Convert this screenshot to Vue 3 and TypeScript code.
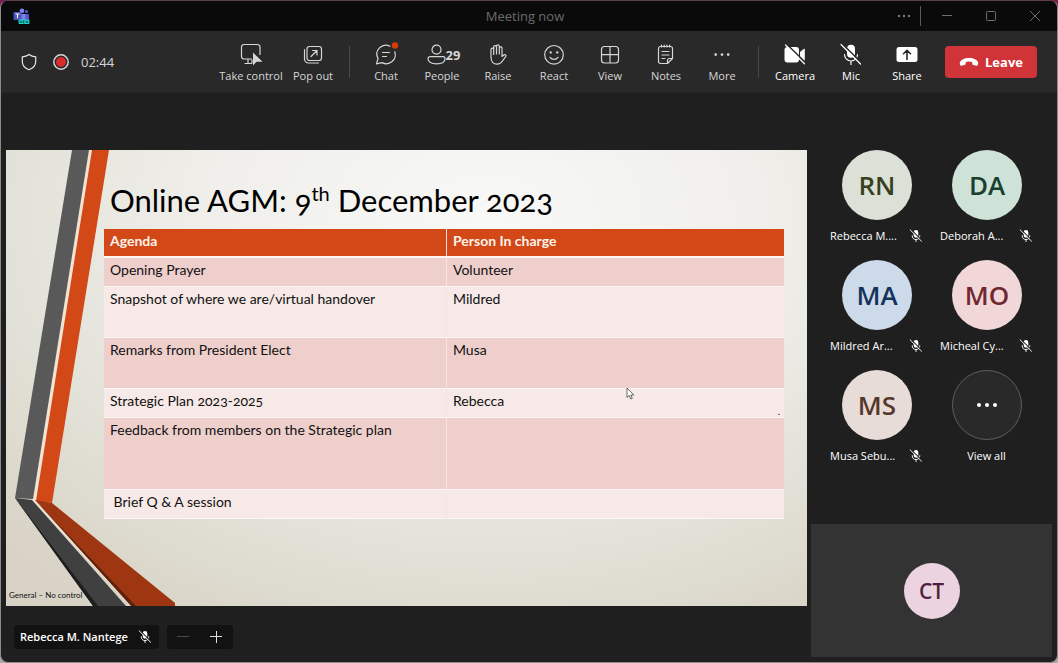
<script setup lang="ts">
interface Shape {
  d: string
  solid?: boolean
  gap?: boolean
}

interface Tool {
  id: string
  label: string
  shapes: Shape[]
  count?: number
  alert?: boolean
  bright?: boolean
  wide?: boolean
}

interface Person {
  initials: string
  name: string
  tone: string
}

const shareTools: Tool[] = [
  {
    id: 'control',
    label: 'Take control',
    wide: true,
    shapes: [
      { d: 'M12.500 16H5A2.500 2.500 0 0 1 2.500 13.500V4A2.500 2.500 0 0 1 5 1.500H18.500A2.500 2.500 0 0 1 21 4V11.500M9 16V20M13 17V20M6 20.500H12.500' },
      { d: 'M14 9.500V22.500L17.500 18.800H23.500Z', solid: true },
    ],
  },
  {
    id: 'popout',
    label: 'Pop out',
    shapes: [
      { d: 'M8.500 3.500H18A2.500 2.500 0 0 1 20.500 6V15A2.500 2.500 0 0 1 18 17.500H8.500A2.500 2.500 0 0 1 6 15V6A2.500 2.500 0 0 1 8.500 3.500ZM3.500 6.500V16A4 4 0 0 0 7.500 20H17.500M10 13.500L16 7.500M11.500 7.500H16V12' },
    ],
  },
]

const meetingTools: Tool[] = [
  {
    id: 'chat',
    label: 'Chat',
    alert: true,
    shapes: [
      { d: 'M16 3.200A9 9 0 0 0 4 15.500L2.500 20.800L8 19.600A9 9 0 0 0 20.800 8.800M8.500 9.500H15.500M8.500 13.500H12.500' },
    ],
  },
  {
    id: 'people',
    label: 'People',
    count: 29,
    shapes: [
      { d: 'M12.500 2.200A4.500 4.500 0 1 1 12.500 11.200A4.500 4.500 0 1 1 12.500 2.200ZM6 13.700H19A2 2 0 0 1 21 15.700C21 19 17.500 20.800 12.500 20.800S4 19 4 15.700A2 2 0 0 1 6 13.700Z' },
    ],
  },
  {
    id: 'raise',
    label: 'Raise',
    shapes: [
      { d: 'M5 14V6.500A1.300 1.300 0 0 1 7.700 6.500V11.500M7.700 7V4A1.400 1.400 0 0 1 10.500 4V11M10.500 4V3.300A1.400 1.400 0 0 1 13.300 3.300V11M13.300 5A1.400 1.400 0 0 1 16 5V13.500L18.200 11.700C19.300 11.200 20.500 12.200 19.800 13.300L16.500 18C15 20.300 13.500 21.200 11 21.200C7.300 21.200 5 18.500 5 14' },
    ],
  },
  {
    id: 'react',
    label: 'React',
    shapes: [
      { d: 'M12 2.500A9.300 9.300 0 1 1 12 21.100A9.300 9.300 0 1 1 12 2.500ZM8 14.300C9.900 17 14.100 17 16 14.300' },
      { d: 'M8.700 8.200A1.200 1.200 0 1 1 8.700 10.600A1.200 1.200 0 1 1 8.700 8.200ZM15.300 8.200A1.200 1.200 0 1 1 15.300 10.600A1.200 1.200 0 1 1 15.300 8.200Z', solid: true },
    ],
  },
  {
    id: 'view',
    label: 'View',
    shapes: [
      { d: 'M6.500 3.500H17.500A3 3 0 0 1 20.500 6.500V17A3 3 0 0 1 17.500 20H6.500A3 3 0 0 1 3.500 17V6.500A3 3 0 0 1 6.500 3.500ZM12 3.500V20M3.500 11.700H20.500' },
    ],
  },
  {
    id: 'notes',
    label: 'Notes',
    shapes: [
      { d: 'M6.500 3.500H16.500A2 2 0 0 1 18.500 5.500V15.500L13.500 20.500H6.500A2 2 0 0 1 4.500 18.500V5.500A2 2 0 0 1 6.500 3.500ZM18.500 15.500H15.500A2 2 0 0 0 13.500 17.500V20.500M7.500 2V4M10.200 2V4M12.900 2V4M15.600 2V4M8 8.500H15M8 12H15M8 15.500H11' },
    ],
  },
  {
    id: 'more',
    label: 'More',
    shapes: [
      { d: 'M5.700 10.200A1.400 1.400 0 1 1 5.700 13A1.400 1.400 0 1 1 5.700 10.200ZM12 10.200A1.400 1.400 0 1 1 12 13A1.400 1.400 0 1 1 12 10.200ZM18.200 10.200A1.400 1.400 0 1 1 18.200 13A1.400 1.400 0 1 1 18.200 10.200Z', solid: true },
    ],
  },
]

const micShapes: Shape[] = [
  { d: 'M12 1.800A4 4 0 0 1 16 5.800V10.800A4 4 0 0 1 8 10.800V5.800A4 4 0 0 1 12 1.800Z', solid: true },
  { d: 'M5.500 11.500A6.500 6.500 0 0 0 18.500 11.500M12 18V21.500' },
  { d: 'M3.500 1L22.500 20', gap: true },
  { d: 'M2 1.500L21.500 21' },
]

const deviceTools: Tool[] = [
  {
    id: 'camera',
    label: 'Camera',
    bright: true,
    shapes: [
      { d: 'M4.500 4H13A3 3 0 0 1 16 7V16.500A3 3 0 0 1 13 19.500H4.500A3 3 0 0 1 1.500 16.500V7A3 3 0 0 1 4.500 4ZM17 9L21 5.800Q21.800 5.400 21.800 6.300V17.200Q21.800 18 21 17.600L17 14.500Z', solid: true },
      { d: 'M4 1.500L23 20', gap: true },
      { d: 'M2.500 2L21.500 20.800' },
    ],
  },
  { id: 'mic', label: 'Mic', bright: true, shapes: micShapes },
  {
    id: 'share',
    label: 'Share',
    bright: true,
    shapes: [
      { d: 'M4 4H20A2.500 2.500 0 0 1 22.500 6.500V16.500A2.500 2.500 0 0 1 20 19H4A2.500 2.500 0 0 1 1.500 16.500V6.500A2.500 2.500 0 0 1 4 4Z', solid: true },
      { d: 'M12 16.500V7.500M8.500 10.700L12 7.200L15.500 10.700', gap: true },
    ],
  },
]

const toolGroups = [shareTools, meetingTools, deviceTools]

const people: Person[] = [
  { initials: 'RN', name: 'Rebecca M....', tone: 'olive' },
  { initials: 'DA', name: 'Deborah A...', tone: 'green' },
  { initials: 'MA', name: 'Mildred Ar...', tone: 'blue' },
  { initials: 'MO', name: 'Micheal Cy...', tone: 'rose' },
  { initials: 'MS', name: 'Musa Sebu...', tone: 'brown' },
]

const agenda = [
  { item: 'Opening Prayer', person: 'Volunteer', size: 'short' },
  { item: 'Snapshot of where we are/virtual handover', person: 'Mildred', size: 'medium' },
  { item: 'Remarks from President Elect', person: 'Musa', size: 'medium' },
  { item: 'Strategic Plan 2023-2025', person: 'Rebecca', size: 'short' },
  { item: 'Feedback from members on the Strategic plan', person: '', size: 'tall' },
  { item: '\u00a0Brief Q & A session', person: '', size: 'short' },
]
</script>

<template>
  <div class="window">
    <header class="titlebar">
      <svg class="logo" viewBox="0 0 17 17" aria-hidden="true">
        <circle cx="13.500" cy="3.500" r="1.600" fill="#5059c9" />
        <circle cx="9" cy="2.800" r="2.400" fill="#7b83eb" />
        <path d="M11 6H16V10.500A3 3 0 0 1 11 12Z" fill="#5059c9" />
        <path d="M5 6H12.500V11A4 4 0 0 1 5 11Z" fill="#7b83eb" />
        <rect x="0.500" y="4" width="8" height="8" rx="1" fill="#4b53bc" />
        <path d="M2.500 6H6.500M4.500 6V10.300" stroke="#fff" stroke-width="1.100" />
        <rect x="5.500" y="11.500" width="11" height="4.500" rx="1" fill="#1fd3cb" />
        <path d="M7 15V12.700L8.700 15V12.700M11.500 12.700H10V15H11.500M10 13.800H11.300M12.700 12.700L13.300 15L14 13.200L14.700 15L15.300 12.700" fill="none" stroke="#06403d" stroke-width="0.600" />
      </svg>
      <h1>Meeting now</h1>
      <div class="window-controls">
        <button type="button" class="dots" aria-label="More options">
          <svg viewBox="0 0 14 4"><circle cx="2" cy="2" r="1.200" /><circle cx="7" cy="2" r="1.200" /><circle cx="12" cy="2" r="1.200" /></svg>
        </button>
        <span class="rule"></span>
        <button type="button" aria-label="Minimize"><svg viewBox="0 0 12 12"><path d="M1 5.500H11" /></svg></button>
        <button type="button" aria-label="Maximize"><svg viewBox="0 0 12 12"><rect x="1.500" y="1.500" width="9" height="9" rx="1" /></svg></button>
        <button type="button" aria-label="Close"><svg viewBox="0 0 12 12"><path d="M1 1L11 11M11 1L1 11" /></svg></button>
      </div>
    </header>

    <div class="toolbar">
      <div class="status">
        <svg class="shield" viewBox="0 0 16 18" aria-hidden="true">
          <path d="M8 1.500C10 3 12.300 3.700 14.700 3.800V8.500C14.700 12.500 12 15.300 8 16.700C4 15.300 1.300 12.500 1.300 8.500V3.800C3.700 3.700 6 3 8 1.500Z" />
        </svg>
        <svg class="record" viewBox="0 0 16 16" role="img" aria-label="Recording">
          <circle cx="8" cy="8" r="7.200" fill="none" stroke="#d6d6d6" stroke-width="1.500" />
          <circle cx="8" cy="8" r="5" fill="#d92c2c" />
        </svg>
        <time>02:44</time>
      </div>
      <nav class="tools" aria-label="Meeting controls">
        <div v-for="(group, index) in toolGroups" :key="index" class="group">
          <button
            v-for="tool in group"
            :key="tool.id"
            type="button"
            class="tool"
            :class="{ wide: tool.wide, bright: tool.bright }"
          >
            <span class="glyph">
              <svg class="icon" viewBox="0 0 24 24" aria-hidden="true">
                <path v-for="(shape, n) in tool.shapes" :key="n" :d="shape.d" :class="{ solid: shape.solid, gap: shape.gap }" />
                <circle v-if="tool.alert" class="alert" cx="21" cy="2.500" r="3.200" />
              </svg>
              <b v-if="tool.count">{{ tool.count }}</b>
            </span>
            <span class="label">{{ tool.label }}</span>
          </button>
        </div>
        <button type="button" class="leave">
          <svg viewBox="0 0 20 10" aria-hidden="true">
            <path d="M10 1C14.500 1 19 3 19.200 6C19.300 7.200 18.800 8.900 17.600 8.700L14.600 8.100C13.600 7.900 13.400 7.200 13.300 6.200L13.100 5C11.200 4.300 8.800 4.300 6.900 5L6.700 6.200C6.600 7.200 6.400 7.900 5.400 8.100L2.400 8.700C1.200 8.900 0.700 7.200 0.800 6C1 3 5.500 1 10 1Z" />
          </svg>
          Leave
        </button>
      </nav>
    </div>

    <div class="content">
      <main class="stage">
        <section class="slide">
          <svg class="ribbons" viewBox="0 0 180 456" aria-hidden="true">
            <path d="M84 0L28 349L127 456" fill="none" stroke="#f3e3d3" stroke-width="4" />
            <path d="M66 0H83L27 349L9 348Z" fill="#595959" />
            <path d="M86 0H103L46 353L30 351Z" fill="#d24817" />
            <path d="M9 348L26 350L120 456H87Z" fill="#404040" />
            <path d="M9 348L92 456H87Z" fill="#1e1e1e" />
            <path d="M29 350L46 353L169 453V456H128Z" fill="#9d3611" />
            <path d="M29 350L125 456H130Z" fill="#5f210b" />
          </svg>
          <h2>Online AGM: 9<sup>th</sup> December 2023</h2>
          <table>
            <thead>
              <tr><th scope="col">Agenda</th><th scope="col">Person In charge</th></tr>
            </thead>
            <tbody>
              <tr v-for="row in agenda" :key="row.item" :class="row.size">
                <td>{{ row.item }}</td>
                <td>{{ row.person }}</td>
              </tr>
            </tbody>
          </table>
          <p class="classification">General – No control</p>
          <span class="speck">.</span>
          <svg class="cursor" viewBox="0 0 9 13" aria-hidden="true">
            <path d="M1 1V10.500L3.200 8.500L4.800 12L6.300 11.300L4.800 8H7.800Z" />
          </svg>
        </section>
        <footer class="stage-bar">
          <div class="presenter">
            Rebecca M. Nantege
            <svg class="icon small" viewBox="0 0 24 24" role="img" aria-label="Muted">
              <path v-for="(shape, n) in micShapes" :key="n" :d="shape.d" :class="{ solid: shape.solid, gap: shape.gap }" />
            </svg>
          </div>
          <div class="zoom">
            <button type="button" aria-label="Zoom out" disabled><svg viewBox="0 0 12 12"><path d="M0 5.500H12" /></svg></button>
            <button type="button" aria-label="Zoom in"><svg viewBox="0 0 12 12"><path d="M0 5.500H12M6.500 0V12" /></svg></button>
          </div>
        </footer>
      </main>

      <aside class="roster">
        <ul>
          <li v-for="person in people" :key="person.initials">
            <span class="avatar" :class="person.tone">{{ person.initials }}</span>
            <span class="name">
              {{ person.name }}
              <svg class="icon small" viewBox="0 0 24 24" role="img" aria-label="Muted">
                <path v-for="(shape, n) in micShapes" :key="n" :d="shape.d" :class="{ solid: shape.solid, gap: shape.gap }" />
              </svg>
            </span>
          </li>
          <li>
            <button type="button" class="view-all">
              <span class="avatar outline">
                <svg viewBox="0 0 22 6" aria-hidden="true"><circle cx="3" cy="3" r="2" /><circle cx="11" cy="3" r="2" /><circle cx="19" cy="3" r="2" /></svg>
              </span>
              <span class="name">View all</span>
            </button>
          </li>
        </ul>
        <div class="self"><span class="avatar plum">CT</span></div>
      </aside>
    </div>
  </div>
</template>

<style>
body {
  margin: 0;
  background: linear-gradient(#7a1f50 0, #7a1f50 30px, #a9a9a9 31px);
}
</style>

<style scoped>
* {
  box-sizing: border-box;
}

.window {
  display: flex;
  flex-direction: column;
  min-height: 100vh;
  border: 1px solid #8c8c8c;
  border-top-color: #5c3e4b;
  border-radius: 8px;
  overflow: hidden;
  background: #1f1f1f;
  color: #fff;
  font: 11px/16px "Open Sans", "Noto Sans", sans-serif;
}

button {
  padding: 0;
  border: 0;
  background: none;
  color: inherit;
  font: inherit;
}

svg {
  display: block;
}

.titlebar {
  display: grid;
  grid-template-columns: 1fr auto 1fr;
  align-items: center;
  height: 30px;
  background: #0a0a0a;
}

.logo {
  width: 17px;
  height: 17px;
  margin-left: 12px;
}

h1 {
  margin: 0 8px 0 0;
  color: #6a6a6a;
  font-size: 13px;
  font-weight: 400;
}

.window-controls {
  display: flex;
  align-items: center;
  justify-content: flex-end;
}

.window-controls button {
  display: grid;
  place-items: center;
  width: 44px;
  height: 30px;
}

.window-controls .dots {
  width: 32px;
}

.window-controls svg {
  width: 12px;
  height: 12px;
  fill: none;
  stroke: #6e6e6e;
}

.window-controls .dots svg {
  width: 14px;
  height: 4px;
  fill: #777;
  stroke: none;
}

.rule {
  width: 1px;
  height: 20px;
  margin-right: 4px;
  background: #5a5a5a;
}

.toolbar {
  display: flex;
  justify-content: space-between;
  height: 62px;
  padding: 0 20px;
  border-bottom: 1px solid #242424;
  background: #292929;
}

.status {
  display: flex;
  align-items: center;
  font-size: 13px;
}

.shield {
  width: 16px;
  height: 18px;
  fill: none;
  stroke: #e6e6e6;
  stroke-width: 1.2;
}

.record {
  width: 16px;
  height: 16px;
  margin: 0 12px 0 16px;
}

.status time {
  color: #d6d6d6;
}

.tools,
.group {
  display: flex;
}

.group + .group::before {
  content: "";
  width: 1px;
  height: 32px;
  margin: 15px 8px 0;
  background: #484848;
}

.tool {
  display: flex;
  flex-direction: column;
  align-items: center;
  width: 56px;
  padding-top: 12px;
  color: #d6d6d6;
}

.tool.wide {
  width: 68px;
}

.tool.bright {
  color: #fff;
}

.glyph {
  display: flex;
  align-items: center;
  height: 24px;
  margin-bottom: 1px;
}

.glyph b {
  margin-left: -2px;
  font-size: 13px;
}

.label {
  white-space: nowrap;
}

.icon {
  width: 24px;
  height: 24px;
  overflow: visible;
  fill: none;
  stroke: currentColor;
  stroke-width: 1.2;
  stroke-linecap: round;
  stroke-linejoin: round;
}

.icon .solid {
  fill: currentColor;
  stroke: none;
}

.icon .gap {
  stroke: #292929;
  stroke-width: 1.6;
}

.icon .alert {
  fill: #d83b01;
  stroke: none;
}

.icon.small {
  width: 14px;
  height: 14px;
  stroke-width: 1.6;
}

.icon.small .gap {
  stroke: #1f1f1f;
  stroke-width: 2;
}

.leave {
  display: flex;
  align-items: center;
  justify-content: center;
  gap: 6px;
  width: 92px;
  height: 32px;
  margin: 15px 0 0 10px;
  border-radius: 4px;
  background: #d13438;
  font-size: 13px;
  font-weight: 700;
}

.leave svg {
  width: 20px;
  height: 10px;
  fill: #fff;
}

.content {
  display: flex;
  flex: 1;
  gap: 4px;
  padding: 57px 5px 5px;
}

.stage {
  flex: 1;
  min-width: 0;
}

.slide {
  position: relative;
  min-height: 456px;
  padding: 30px 23px 0 98px;
  overflow: hidden;
  background: radial-gradient(ellipse 85% 105% at 60% 15%, #f8f8f7 0, #f0efeb 40%, #e2e1d7 72%, #d9d4c7 95%, #d6cec2 120%);
  color: #111;
  font-family: Lato, "Open Sans", sans-serif;
  font-variant-numeric: oldstyle-nums;
}

.ribbons {
  position: absolute;
  top: 0;
  left: 0;
  width: 180px;
  height: 456px;
}

h2 {
  margin: 0 0 9px 6px;
  color: #000;
  font-size: 31px;
  font-weight: 400;
  line-height: 40px;
}

h2 sup {
  font-size: 20px;
  line-height: 0;
}

table {
  position: relative;
  width: 100%;
  border-collapse: separate;
  border-spacing: 0;
  table-layout: fixed;
  font-size: 14px;
  line-height: 20px;
}

th,
td {
  height: 29px;
  padding: 2px 6px;
  border-bottom: 1px solid #fdf6f3;
  text-align: left;
  vertical-align: top;
}

th {
  border-bottom-width: 2px;
  background: #d24817;
  color: #fff3ea;
}

th:first-child {
  width: 342px;
}

th + th,
td + td {
  border-left: 1px solid #f9e4dc;
}

tbody tr {
  background: #f7e9e7;
}

tbody tr:nth-child(odd) {
  background: #efcfcc;
}

.medium td {
  height: 51px;
}

.tall td {
  height: 72px;
}

.classification {
  position: absolute;
  bottom: 5px;
  left: 3px;
  margin: 0;
  font-size: 8px;
  line-height: 12px;
}

.speck {
  position: absolute;
  top: 254px;
  right: 27px;
  font-size: 10px;
  line-height: 14px;
}

.cursor {
  position: absolute;
  top: 237px;
  left: 620px;
  width: 9px;
  height: 13px;
  fill: #fff;
  stroke: #444;
  stroke-width: 0.8;
}

.stage-bar {
  display: flex;
  gap: 8px;
  margin: 19px 0 0 8px;
}

.presenter,
.zoom {
  display: flex;
  align-items: center;
  height: 24px;
  border-radius: 4px;
  background: #121212;
}

.presenter {
  gap: 10px;
  padding: 0 7px 0 6px;
  font-weight: 600;
}

.zoom button {
  display: grid;
  place-items: center;
  width: 33px;
  height: 24px;
}

.zoom svg {
  width: 12px;
  height: 12px;
  fill: none;
  stroke: #e0e0e0;
}

.zoom button:disabled svg {
  stroke: #4a4a4a;
}

.roster {
  display: flex;
  flex-direction: column;
  justify-content: space-between;
  width: 241px;
}

ul {
  display: grid;
  grid-template-columns: 94px 94px;
  gap: 14px 16px;
  margin: 0 0 0 19px;
  padding: 0;
  list-style: none;
}

li,
.view-all {
  display: flex;
  flex-direction: column;
  align-items: center;
  width: 94px;
}

.avatar {
  display: grid;
  place-items: center;
  width: 70px;
  height: 70px;
  border-radius: 50%;
  font-size: 26px;
  font-weight: 600;
}

.olive {
  background: #dce1d8;
  color: #37411f;
}

.green {
  background: #cfe2d8;
  color: #17402e;
}

.blue {
  background: #cddaea;
  color: #14335a;
}

.rose {
  background: #f2d7d9;
  color: #712730;
}

.brown {
  background: #e8dcd8;
  color: #56382b;
}

.outline {
  border: 1px solid #5e5e5e;
  background: #292929;
}

.outline svg {
  width: 22px;
  height: 6px;
  fill: #fff;
}

.name {
  display: flex;
  align-items: center;
  justify-content: space-between;
  width: 94px;
  height: 20px;
  margin-top: 6px;
  padding-right: 1px;
  white-space: nowrap;
}

.view-all .name {
  justify-content: center;
}

.self {
  display: grid;
  place-items: center;
  height: 133px;
  background: #333;
}

.plum {
  width: 56px;
  height: 56px;
  background: #ebd3e0;
  color: #4f1f40;
  font-size: 21px;
}
</style>
